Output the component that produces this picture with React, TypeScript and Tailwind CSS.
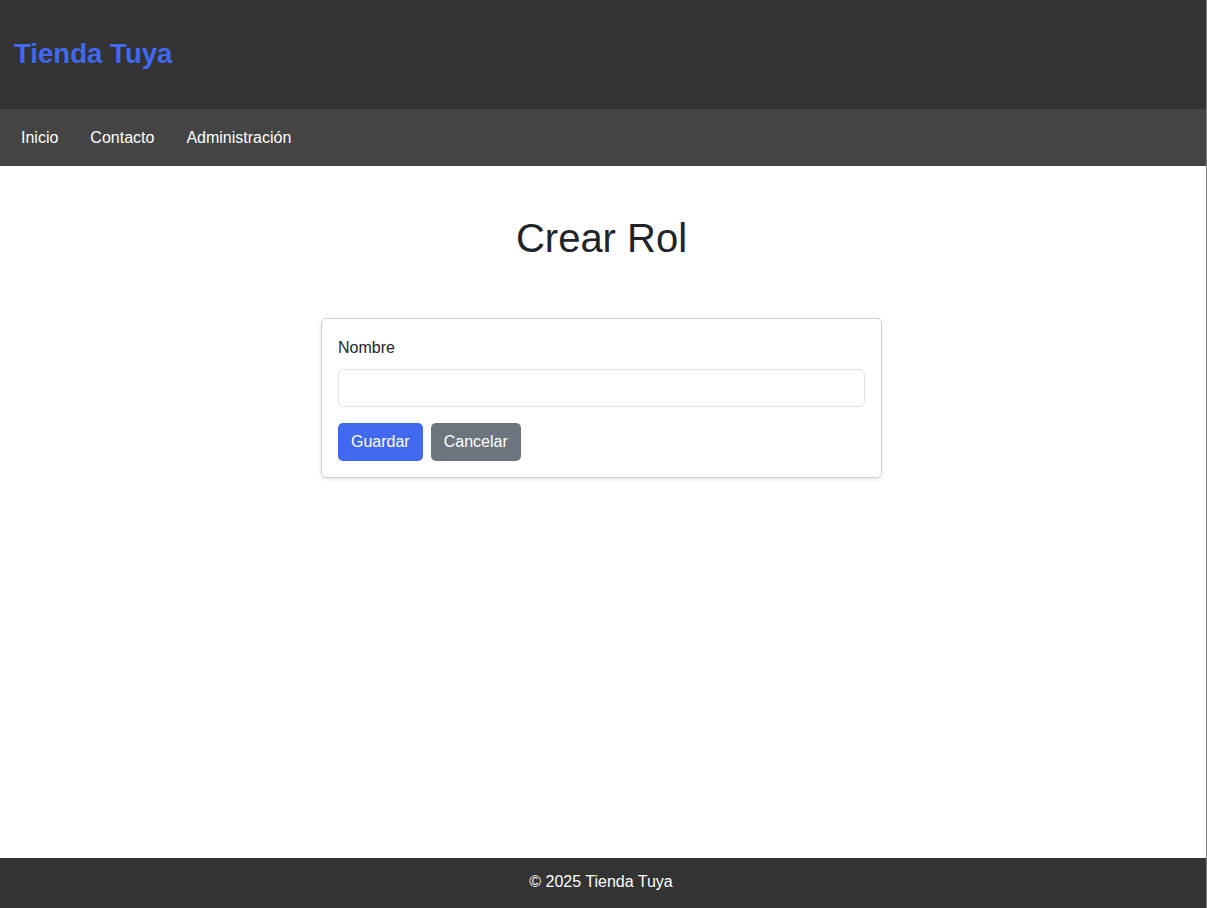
import React from "react";

export default function App() {
  return (
    <div
      className="min-h-screen flex flex-col bg-white border-r border-[#808080] text-[#212529]"
      style={{ fontFamily: '"Liberation Sans", Arial, sans-serif' }}
    >
      <header className="bg-[#333333] h-[109px] flex items-center px-[14px] pb-[2px]">
        <h1 className="text-[27.6px] font-bold text-[#4169f0] leading-none">Tienda Tuya</h1>
      </header>
      <nav className="bg-[#444444] h-[57px] flex items-center px-[21px] gap-[32px] text-white text-[16px]">
        <a href="#">Inicio</a>
        <a href="#">Contacto</a>
        <a href="#">Administración</a>
      </nav>
      <main className="flex-1 flex flex-col items-center pr-[3px]">
        <h2 className="text-[40px] leading-[48px] mt-[48px] mb-[56px] text-[#212529]">Crear Rol</h2>
        <div className="w-[561px] border border-[#d0d0d0] rounded-[5px] shadow-[0_1px_4px_rgba(0,0,0,0.1)] px-4 pb-4 pt-[17px]">
          <label className="block text-[16px] leading-[24px] mb-[9px]">Nombre</label>
          <input
            type="text"
            className="block w-full h-[38px] border border-[#dee2e6] rounded-[6px] px-3 outline-none"
          />
          <div className="flex gap-[8px] mt-[16px]">
            <button className="h-[38px] px-[13px] rounded-[5px] bg-[#4169f0] text-white text-[16px]">Guardar</button>
            <button className="h-[38px] px-[13px] rounded-[5px] bg-[#6c757d] text-white text-[16px]">Cancelar</button>
          </div>
        </div>
      </main>
      <footer className="bg-[#333333] h-[50px] flex items-center justify-center text-white text-[16px] pr-[4px] pb-[3px]">
        © 2025 Tienda Tuya
      </footer>
    </div>
  );
}
